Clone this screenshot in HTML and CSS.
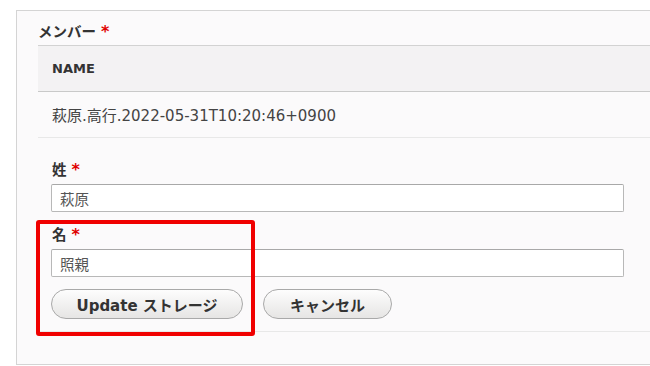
FILE: index.html
```html
<!DOCTYPE html>
<html lang="ja">
<head>
  <meta charset="UTF-8">
  <meta name="viewport" content="width=device-width, initial-scale=1.0">
  <title>メンバー</title>
  <link rel="stylesheet" href="styles.css">
</head>
<body>

  <div class="panel">
    <div class="field-label">メンバー <span class="req">*</span></div>
    <table class="members">
      <thead>
        <tr><th>NAME</th></tr>
      </thead>
      <tbody>
        <tr><td class="name-cell">萩原.高行.2022-05-31T10:20:46+0900</td></tr>
        <tr>
          <td class="form-cell">
            <form class="edit-form">
              <label class="field-label" for="lastName">姓 <span class="req">*</span></label>
              <input type="text" id="lastName" value="萩原">

              <label class="field-label second" for="firstName">名 <span class="req">*</span></label>
              <input type="text" id="firstName" value="照親">

              <div class="actions">
                <button type="button" class="btn btn-update">Update ストレージ</button>
                <button type="button" class="btn btn-cancel">キャンセル</button>
              </div>
            </form>
            <div class="highlight"></div>
          </td>
        </tr>
      </tbody>
    </table>
  </div>

</body>
</html>
```

FILE: styles.css
```css
body {
  margin: 0;
  background: #ffffff;
  font-family: "DejaVu Sans", "Noto Sans CJK JP", sans-serif;
  color: #333;
  overflow: hidden;
}
.panel {
  width: 700px;
  margin: 10px 0 0 16px;
  padding: 11px 0 32px 21px;
  background: #fbfafb;
  border: 1px solid #d4d4d4;
  border-right: none;
}
.field-label {
  display: block;
  font-size: 14.5px;
  font-weight: bold;
  line-height: 20px;
  color: #333;
}
.req {
  color: #e00000;
  font-size: 16px;
}
.members {
  width: 100%;
  margin-top: 3px;
  border-collapse: collapse;
  border-top: 1px solid #d2d2d2;
}
.members th {
  height: 45px;
  padding: 0 14px;
  text-align: left;
  font-size: 13px;
  font-weight: bold;
  color: #333;
  background: #f3f2f3;
  border-bottom: 1px solid #c9c9c9;
}
.members td {
  border-bottom: 1px solid #e8e8e8;
}
.name-cell {
  height: 45px;
  padding: 0 14px;
  font-size: 15px;
  color: #444;
}
.form-cell {
  position: relative;
  padding: 22px 0 12px 13px;
}
.edit-form .field-label {
  padding-left: 1px;
  margin-bottom: 4px;
}
.edit-form .second {
  margin-top: 13px;
}
.edit-form input {
  display: block;
  width: 573px;
  height: 28px;
  padding: 0 8px;
  box-sizing: border-box;
  font-family: inherit;
  font-size: 14.5px;
  color: #555;
  background: #fff;
  border: 1px solid #b8b8b8;
  border-top-color: #a8a8a8;
  border-radius: 2px;
}
.actions {
  display: flex;
  gap: 20px;
  margin-top: 12px;
}
.btn {
  height: 30px;
  font-family: inherit;
  font-size: 15px;
  font-weight: bold;
  color: #333;
  background: linear-gradient(#fdfdfd, #e6e5e4);
  border: 1px solid #a9a9a9;
  border-radius: 16px;
  cursor: pointer;
}
.btn-update {
  width: 192px;
}
.btn-cancel {
  width: 129px;
}
.highlight {
  position: absolute;
  left: -2px;
  top: 82px;
  width: 211px;
  height: 108px;
  border: 4px solid #f00000;
  border-radius: 3px;
}
```
